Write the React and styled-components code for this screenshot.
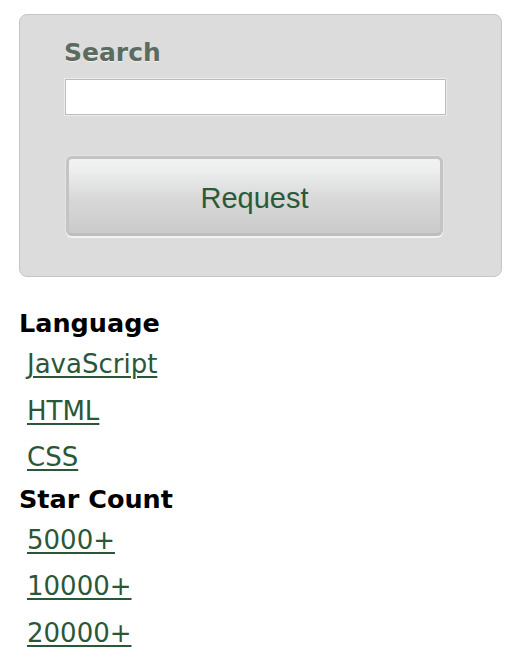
import React from "react";
import styled, { createGlobalStyle } from "styled-components";

const GlobalStyle = createGlobalStyle`
  html, body {
    margin: 0;
    padding: 0;
    background: #ffffff;
  }
  body {
    font-family: "DejaVu Sans", Verdana, sans-serif;
  }
`;

const Page = styled.div`
  padding: 14px 0 0 19px;
  width: 483px;
`;

const SearchPanel = styled.form`
  box-sizing: border-box;
  height: 263px;
  padding: 23px 0 0 44px;
  background: #dcdcdc;
  border: 1px solid #c5c5c5;
  border-radius: 8px;
`;

const Label = styled.label`
  display: block;
  font-size: 25px;
  line-height: 30px;
  font-weight: bold;
  color: #5b6b60;
  text-shadow: 0 1px 1px rgba(255, 255, 255, 0.6);
`;

const SearchInput = styled.input`
  display: block;
  box-sizing: border-box;
  width: 381px;
  height: 36px;
  margin: 11px 0 0 1px;
  border: 1px solid #bcbcbc;
  box-shadow: 0 0 0 1px #ececec;
  background: #ffffff;
  outline: none;
`;

const RequestButton = styled.button`
  display: flex;
  align-items: center;
  justify-content: center;
  box-sizing: border-box;
  width: 377px;
  height: 80px;
  margin: 41px 0 0 2px;
  padding: 5px 0 0;
  border: 3px solid #c4c4c4;
  border-bottom-color: #bdbdbd;
  border-radius: 6px;
  background: linear-gradient(#f1f2f1 0%, #eceded 18%, #d9d9d9 52%, #cacaca 100%);
  box-shadow: 0 2px 0 #f3f3f3, 0 0 0 1px #e4e4e4;
  font-family: "Liberation Sans", Arial, sans-serif;
  font-size: 29px;
  color: #2b5a3a;
  cursor: pointer;
`;

const FilterGroup = styled.div`
  margin-top: ${(p) => p.$gap}px;
`;

const Heading = styled.div`
  font-size: 25.5px;
  line-height: 35px;
  font-weight: bold;
  color: #000000;
`;

const LinkList = styled.ul`
  list-style: none;
  margin: 0;
  padding: 0 0 0 8px;
`;

const FilterLink = styled.a`
  display: block;
  width: max-content;
  font-size: 26px;
  line-height: 46.5px;
  color: #2a5737;
  text-decoration: underline;
  text-underline-offset: 3px;
  text-decoration-thickness: 2px;
`;

const filters = [
  { title: "Language", gap: 29, items: ["JavaScript", "HTML", "CSS"] },
  { title: "Star Count", gap: 1, items: ["5000+", "10000+", "20000+"] },
];

export default function App() {
  return (
    <>
      <GlobalStyle />
      <Page>
        <SearchPanel onSubmit={(e) => e.preventDefault()}>
          <Label htmlFor="search">Search</Label>
          <SearchInput id="search" type="text" />
          <RequestButton type="submit">Request</RequestButton>
        </SearchPanel>
        {filters.map((group) => (
          <FilterGroup key={group.title} $gap={group.gap}>
            <Heading>{group.title}</Heading>
            <LinkList>
              {group.items.map((item) => (
                <li key={item}>
                  <FilterLink href="#">{item}</FilterLink>
                </li>
              ))}
            </LinkList>
          </FilterGroup>
        ))}
      </Page>
    </>
  );
}
